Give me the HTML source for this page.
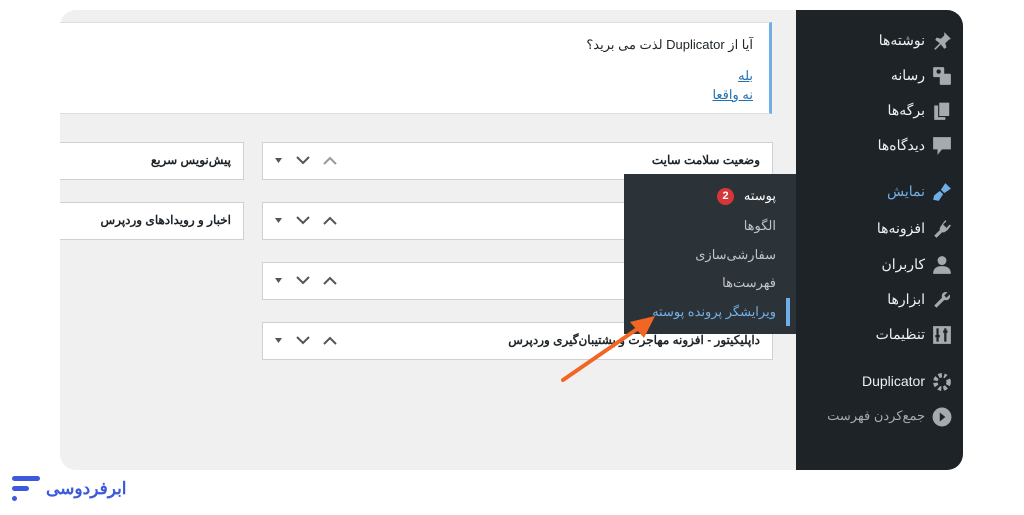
<!DOCTYPE html>
<html><head><meta charset="utf-8"><style>
*{margin:0;padding:0;box-sizing:border-box}
body{width:1024px;height:515px;background:#fff;position:relative;overflow:hidden;font-family:"Liberation Sans","Noto Sans CJK SC",sans-serif}
.abs{position:absolute}
.panel{left:60px;top:10px;width:903px;height:460px;background:#f0f0f1;border-radius:16px;overflow:hidden}
.notice{left:0;top:12px;width:712px;height:92px;background:#fff;border-right:3px solid #72aee6;border-top:1px solid #ddd;border-bottom:1px solid #ddd}
.box{background:#fff;border:1px solid #d0d0d0;height:38px;direction:rtl;font-size:12px;font-weight:bold;color:#1d2327;padding:10px 12px 0 0}
.ctrl{left:10px;top:10px;direction:ltr}
.side{left:736px;top:0;width:167px;height:460px;background:#1d2327}
.mi{right:38px;color:#f0f0f1;font-size:14px;direction:rtl;white-space:nowrap}
.ic{right:11px;width:20px;height:20px}
.sub{left:624px;top:174px;width:172px;height:160px;background:#2c3338}
.si{right:20px;color:#c3c4c7;font-size:13px;direction:rtl;white-space:nowrap}
</style></head><body>
<div class="abs panel">
 <div class="abs notice">
  <div class="abs" style="right:16px;top:14px;font-size:13px;color:#1d2327;direction:rtl">آیا از Duplicator لذت می برید؟</div>
  <div class="abs" style="right:16px;top:45px;font-size:13px;color:#2271b1;text-decoration:underline">بله</div>
  <div class="abs" style="right:16px;top:64px;font-size:13px;color:#2271b1;text-decoration:underline;direction:rtl">نه واقعا</div>
 </div>
 <div class="abs box" style="left:-2px;top:132px;width:186px">پیش‌نویس سریع</div>
 <div class="abs box" style="left:-2px;top:192px;width:186px">اخبار و رویدادهای وردپرس</div>
 <div class="abs box" style="left:202px;top:132px;width:511px">وضعیت سلامت سایت<svg class="abs ctrl" width="70" height="16"><path d="M2 5h7l-3.5 5z" fill="#555"/><path d="M24 4l6 6 6-6" stroke="#555" stroke-width="2" fill="none"/><path d="M51 11l6-6 6 6" stroke="#999" stroke-width="2" fill="none"/></svg></div>
 <div class="abs box" style="left:202px;top:192px;width:511px"><svg class="abs ctrl" width="70" height="16"><path d="M2 5h7l-3.5 5z" fill="#555"/><path d="M24 4l6 6 6-6" stroke="#555" stroke-width="2" fill="none"/><path d="M51 11l6-6 6 6" stroke="#555" stroke-width="2" fill="none"/></svg></div>
 <div class="abs box" style="left:202px;top:252px;width:511px"><svg class="abs ctrl" width="70" height="16"><path d="M2 5h7l-3.5 5z" fill="#555"/><path d="M24 4l6 6 6-6" stroke="#555" stroke-width="2" fill="none"/><path d="M51 11l6-6 6 6" stroke="#555" stroke-width="2" fill="none"/></svg></div>
 <div class="abs box" style="left:202px;top:312px;width:511px">داپلیکیتور - افزونه مهاجرت و پشتیبان‌گیری وردپرس<svg class="abs ctrl" width="70" height="16"><path d="M2 5h7l-3.5 5z" fill="#555"/><path d="M24 4l6 6 6-6" stroke="#555" stroke-width="2" fill="none"/><path d="M51 11l6-6 6 6" stroke="#555" stroke-width="2" fill="none"/></svg></div>
 <div class="abs side">
  <div class="abs mi" style="top:22px">نوشته‌ها</div><svg class="abs ic" style="top:21px" viewBox="0 0 18 18"><path d="M11 1l6 6-2 1-3 3 1 4-2 1-3-4-5 5-1-1 5-5-4-3 1-2 4 1 3-3z" fill="#a7aaad"/></svg>
  <div class="abs mi" style="top:57px">رسانه</div><svg class="abs ic" style="top:56px" viewBox="0 0 18 18"><rect x="1" y="1" width="10" height="9" rx="1" fill="#a7aaad"/><rect x="7" y="7" width="10" height="10" rx="1" fill="#a7aaad"/><circle cx="6" cy="5" r="2" fill="#1d2327"/></svg>
  <div class="abs mi" style="top:92px">برگه‌ها</div><svg class="abs ic" style="top:91px" viewBox="0 0 18 18"><rect x="2" y="4" width="10" height="13" fill="#a7aaad"/><rect x="6" y="1" width="10" height="13" fill="#a7aaad" stroke="#1d2327"/></svg>
  <div class="abs mi" style="top:127px">دیدگاه‌ها</div><svg class="abs ic" style="top:126px" viewBox="0 0 18 18"><path d="M1 1h16v11h-8l-4 5v-5H1z" fill="#a7aaad"/></svg>
  <div class="abs mi" style="top:173px;color:#72aee6">نمایش</div><svg class="abs ic" style="top:172px" viewBox="0 0 18 18"><path d="M12 1l5 5-6 4-3-3zM7 8l3 3-4 6-5-1 1-4z" fill="#72aee6"/></svg>
  <div class="abs mi" style="top:210px">افزونه‌ها</div><svg class="abs ic" style="top:209px" viewBox="0 0 18 18"><path d="M12 1l1 1-3 3 3 3 3-3 1 1-3 4-3 2-2 0-5 5-2-2 5-5v-2l2-3z" fill="#a7aaad"/></svg>
  <div class="abs mi" style="top:246px">کاربران</div><svg class="abs ic" style="top:245px" viewBox="0 0 18 18"><circle cx="9" cy="5" r="4" fill="#a7aaad"/><path d="M1 17c0-5 3-7 8-7s8 2 8 7z" fill="#a7aaad"/></svg>
  <div class="abs mi" style="top:281px">ابزارها</div><svg class="abs ic" style="top:280px" viewBox="0 0 18 18"><path d="M16 4l-3 3-2-2 3-3c-3-1-6 1-5 5L2 14l2 2 7-7c4 1 6-2 5-5z" fill="#a7aaad"/></svg>
  <div class="abs mi" style="top:316px">تنظیمات</div><svg class="abs ic" style="top:315px" viewBox="0 0 18 18"><rect x="1" y="1" width="16" height="16" fill="#a7aaad"/><path d="M5 3v12M12 3v12M3 10h4M10 6h4" stroke="#1d2327" stroke-width="2"/></svg>
  <div class="abs mi" style="top:363px">Duplicator</div><svg class="abs ic" style="top:362px" viewBox="0 0 18 18"><circle cx="9" cy="9" r="6" fill="none" stroke="#a7aaad" stroke-width="4" stroke-dasharray="3 2"/><path d="M4 15L15 3" stroke="#1d2327" stroke-width="2"/></svg>
  <div class="abs mi" style="top:398px;color:#a7aaad;font-size:13px">جمع‌کردن فهرست</div><svg class="abs ic" style="top:397px" viewBox="0 0 18 18"><circle cx="9" cy="9" r="8.5" fill="#a7aaad"/><path d="M7 5l5 4-5 4z" fill="#1d2327"/></svg>
 </div>
</div>
<div class="abs sub">
 <div class="abs" style="right:-6px;top:14px;width:0;height:0;border:6px solid transparent;border-left-color:#2c3338"></div>
 <div class="abs si" style="top:14px;color:#fff">پوسته</div>
 <div class="abs" style="left:93px;top:14px;width:17px;height:17px;border-radius:50%;background:#d63638;color:#fff;font-size:11px;font-weight:bold;text-align:center;line-height:17px">2</div>
 <div class="abs si" style="top:44px">الگوها</div>
 <div class="abs si" style="top:73px">سفارشی‌سازی</div>
 <div class="abs si" style="top:101px">فهرست‌ها</div>
 <div class="abs si" style="top:130px;color:#72aee6">ویرایشگر پرونده پوسته</div>
 <div class="abs" style="right:6px;top:124px;width:4px;height:28px;background:#72aee6"></div>
</div>
<svg class="abs" style="left:0;top:0" width="1024" height="515"><line x1="563" y1="380" x2="640" y2="327" stroke="#f26522" stroke-width="4" stroke-linecap="round"/><polygon points="655,316 630,322 644,338" fill="#f26522"/></svg>
<div class="abs" style="left:12px;top:476px;width:28px;height:5px;border-radius:3px;background:#3b5bdb"></div>
<div class="abs" style="left:12px;top:486px;width:17px;height:5px;border-radius:3px;background:#3b5bdb"></div>
<div class="abs" style="left:12px;top:496px;width:5px;height:5px;border-radius:50%;background:#3b5bdb"></div>
<div class="abs" style="left:46px;top:479px;font-size:17px;font-weight:bold;color:#3b5bdb;direction:rtl">ابرفردوسی</div>
</body></html>
